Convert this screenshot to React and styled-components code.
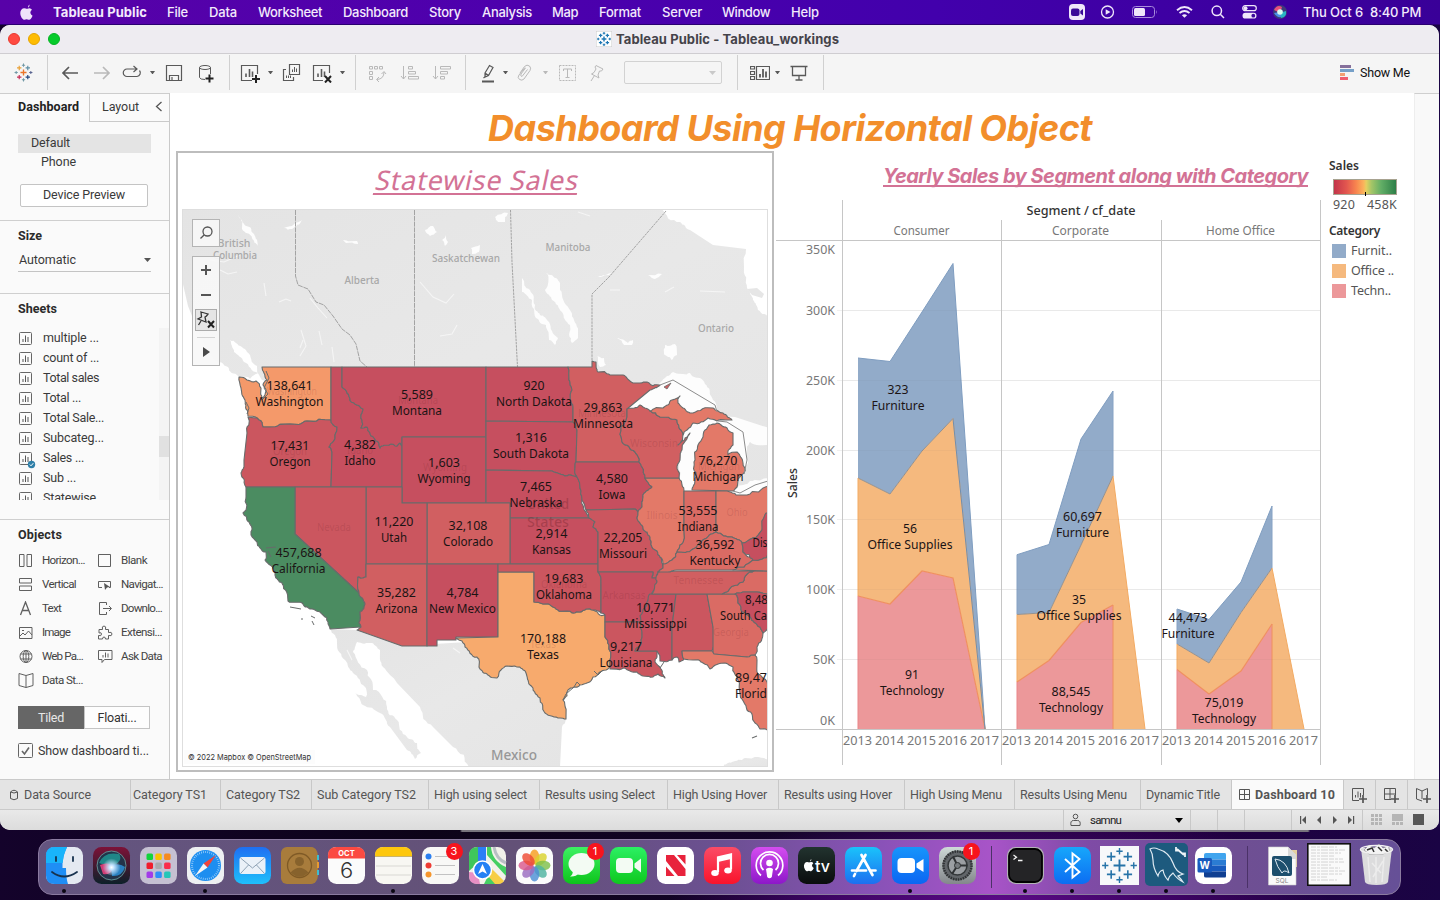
import React, { useLayoutEffect, useRef, useState } from "react";
import styled, { createGlobalStyle, css } from "styled-components";

const GlobalStyle = createGlobalStyle`
  * { box-sizing: border-box; }
  html, body { margin: 0; padding: 0; width: 1440px; height: 900px; overflow: hidden; }
  body { font-family: Roboto, "Liberation Sans", sans-serif; color: #333; }
  svg { display: block; flex: none; }
`;

/* ---------- text that is spaced out to a set measure ---------- */
const FitSpan = styled.span`
  display: inline-block;
  flex: none;
  width: ${(p) => p.$w}px;
  white-space: nowrap;
`;

/* lean: the width that a slanted line adds to its own bounding box */
function Fit({ w, lean = 0, children, ...rest }) {
  const ref = useRef(null);
  const [spacing, setSpacing] = useState(0);
  useLayoutEffect(() => {
    const range = document.createRange();
    range.selectNodeContents(ref.current);
    const natural = range.getBoundingClientRect().width - lean;
    setSpacing((w - natural) / ref.current.textContent.length);
  }, []);
  return (
    <FitSpan ref={ref} $w={w} style={{ letterSpacing: spacing }} {...rest}>
      {children}
    </FitSpan>
  );
}

/* ---------- desktop ---------- */
const Desktop = styled.div`
  width: 1440px;
  height: 900px;
  overflow: hidden;
  display: flex;
  flex-direction: column;
  background:
    linear-gradient(90deg, #0000 0 460px, #77737c 462px 1308px, #0000 1310px) 0 830px / 1440px 2px no-repeat,
    radial-gradient(ellipse 330px 90px at 1000px 900px, #5a0a86 0, #3c0462 55%, #0000 100%),
    linear-gradient(90deg, #14032b 0, #0c0318 30%, #16042d 60%, #22003f 80%, #1a0444 100%);
`;

const MenuBar = styled.div`
  height: 25px;
  flex: none;
  display: flex;
  align-items: center;
  padding: 0 19px 1px 20px;
  background: linear-gradient(90deg, #5802a8 0, #4d00ad 35%, #4200ac 65%, #390098 100%);
  border-bottom: 1px solid #2a0070;
  color: #f3eafc;
  font: 500 13px/22px Inter, sans-serif;
`;
const MenuItem = styled(Fit)`
  margin-left: ${(p) => p.$ml ?? 21}px;
  font-weight: ${(p) => (p.$bold ? 700 : 500)};
`;
const MenuSpacer = styled.div`flex: 1;`;
const MenuExtra = styled.div`
  margin-left: ${(p) => p.$ml}px;
`;

/* ---------- window ---------- */
const Window = styled.div`
  width: 1439px;
  height: 805px;
  flex: none;
  display: flex;
  flex-direction: column;
  border-radius: 10px;
  overflow: hidden;
  background: #f5f5f5;
`;
const TitleBar = styled.div`
  height: 29px;
  flex: none;
  display: flex;
  align-items: center;
  background: #eeecf1;
  border-bottom: 1px solid #cfcdd1;
  padding: 0 0 1px 8px;
`;
const Light = styled.i`
  width: 12px;
  height: 12px;
  border-radius: 50%;
  margin-right: 8px;
  background: ${(p) => p.$c};
  border: 1px solid ${(p) => p.$b};
`;
const WindowTitle = styled.div`
  margin-left: 528px;
  display: flex;
  align-items: center;
  gap: 4px;
  font: 700 13px/20px Inter, sans-serif;
  color: #45434a;
`;

const Toolbar = styled.div`
  height: 39px;
  flex: none;
  display: flex;
  align-items: center;
  padding: 0 29px 2px 0;
  background: #f5f5f5;
`;
const Tool = styled.div`
  margin-left: ${(p) => p.$ml}px;
  flex: none;
  color: ${(p) => (p.$off ? "#b9b9b9" : "#595959")};
`;
const Divider = styled.div`
  width: 1px;
  height: 35px;
  flex: none;
  margin-left: ${(p) => p.$ml}px;
  background: #d0d0d0;
`;
const FitSelect = styled.div`
  width: 98px;
  height: 23px;
  margin-left: 17px;
  flex: none;
  border: 1px solid #d2d2d2;
  border-radius: 2px;
  display: flex;
  align-items: center;
  justify-content: flex-end;
  padding-right: 5px;
  color: #c9c9c9;
`;
const ShowMe = styled.div`
  margin-left: auto;
  display: flex;
  align-items: center;
  gap: 6px;
  font: 12.5px/20px Roboto, sans-serif;
  color: #111;
`;

const Body = styled.div`
  height: 686px;
  flex: none;
  display: flex;
`;

/* ---------- side pane ---------- */
const Side = styled.div`
  width: 170px;
  flex: none;
  background: #fafafa;
  border-right: 1px solid #cacaca;
  font: 12.5px/20px Roboto, sans-serif;
  color: #3a3a3a;
`;
const SideTabs = styled.div`
  display: flex;
  height: 29px;
  border-top: 1px solid #cdcdcd;
`;
const ActiveTab = styled.div`
  width: 90px;
  padding: 3px 0 0 18px;
  border-right: 1px solid #cacaca;
  font-weight: 700;
  color: #222;
`;
const OtherTab = styled.div`
  flex: 1;
  display: flex;
  align-items: center;
  padding: 0 6px 2px 12px;
  justify-content: space-between;
  border-bottom: 1px solid #cacaca;
`;
const Section = styled.div`
  height: ${(p) => p.$h}px;
  padding-top: ${(p) => p.$top ?? 0}px;
  border-bottom: ${(p) => (p.$last ? 0 : 1)}px solid #cfcfcf;
  overflow: hidden;
`;
const Heading = styled.div`
  padding: 5px 0 0 18px;
  height: 26px;
  font-weight: 700;
  color: #2b2b2b;
`;
const DeviceRow = styled.div`
  width: 133px;
  height: 19px;
  line-height: 18px;
  margin-left: 18px;
  padding-left: ${(p) => p.$pad}px;
  background: ${(p) => (p.$on ? "#e4e4e4" : "none")};
`;
const PreviewButton = styled.div`
  width: 128px;
  height: 23px;
  margin: 12px 0 0 20px;
  border: 1px solid #c4c4c4;
  border-radius: 2px;
  background: #fff;
  text-align: center;
  line-height: 20px;
`;
const SizeSelect = styled.div`
  width: 133px;
  margin: 2px 0 0 18px;
  padding: 1px 0 0 1px;
  height: 23px;
  display: flex;
  justify-content: space-between;
  align-items: flex-start;
  border-bottom: 1px solid #c4c4c4;
  svg { margin-top: 8px; }
`;
const SheetBox = styled.div`
  height: 172px;
  margin-top: 8px;
  display: flex;
  justify-content: space-between;
  overflow: hidden;
`;
const SheetRow = styled.div`
  display: flex;
  align-items: center;
  height: 20px;
  padding-left: 18px;
  gap: 9px;
`;
const Track = styled.div`
  width: 10px;
  height: 172px;
  padding-top: 108px;
  background: #f4f4f4;
`;
const Thumb = styled.div`
  height: 21px;
  background: #e1e1e1;
`;
const ObjectGrid = styled.div`
  display: grid;
  grid-template-columns: 79px 72px;
  grid-auto-rows: 24px;
  margin: 2px 0 0 18px;
  font-size: 11.6px;
`;
const ObjectItem = styled.div`
  display: flex;
  align-items: center;
  gap: 8px;
  color: #444;
`;
const Segmented = styled.div`
  display: flex;
  margin: 14px 0 0 18px;
  width: 132px;
  height: 23px;
`;
const Segment = styled.div`
  flex: 1;
  text-align: center;
  line-height: 21px;
  border: 1px solid ${(p) => (p.$on ? "#666" : "#c4c4c4")};
  background: ${(p) => (p.$on ? "#666" : "#fdfdfd")};
  color: ${(p) => (p.$on ? "#e8e8e8" : "#333")};
`;
const CheckRow = styled.div`
  display: flex;
  align-items: center;
  gap: 4px;
  margin: 12px 0 0 18px;
`;

/* ---------- dashboard canvas ---------- */
const Canvas = styled.div`
  width: 1244px;
  flex: none;
  background: #fff;
  display: flex;
  flex-direction: column;
`;
const Gutter = styled.div`
  flex: 1;
  background: #f9f9f9;
  border-top: 1px solid #cfcfcf;
  border-left: 1px solid #eee;
`;
const DashTitle = styled.div`
  height: 58px;
  padding-left: 318px;
  font: italic 700 36px/70px Inter, sans-serif;
  color: #f28e2b;
`;
const Panels = styled.div`
  display: flex;
  padding-left: 6px;
`;
const MapPanel = styled.div`
  width: 598px;
  height: 621px;
  flex: none;
  border: 2px solid #bdbdbd;
  position: relative;
`;
const MapTitle = styled.div`
  height: 56px;
  padding-left: 198px;
  font: 400 27px/54px "Noto Sans", sans-serif;
  color: #d37295;
  span {
    height: 31px;
    line-height: 32px;
    margin-top: 11px;
    vertical-align: top;
    border-bottom: 2px solid #d37295;
    transform: skewX(-12deg);
  }
`;
const MapFrame = styled.div`
  width: 586px;
  height: 558px;
  margin-left: 4px;
  border: 1px solid #dedede;
`;
const controlBox = css`
  position: absolute;
  left: 14px;
  width: 28px;
  background: rgba(248, 248, 248, 0.93);
  border: 1px solid #b4b4b4;
  display: flex;
  flex-direction: column;
  align-items: center;
`;
const SearchControl = styled.div`
  ${controlBox}
  top: 66px;
  height: 28px;
  justify-content: center;
`;
const ZoomControl = styled.div`
  ${controlBox}
  top: 103px;
  height: 110px;
`;

const ChartPanel = styled.div`
  width: 544px;
  margin-left: 2px;
  flex: none;
`;
const ChartTitle = styled.div`
  height: 48px;
  padding-left: 107px;
  font: italic 700 20px/26px Inter, sans-serif;
  color: #d37295;
  span { border-bottom: 2px solid #d37295; height: 23px; line-height: 24px; margin-top: 13px; }
`;
const Legend = styled.div`
  padding: 5px 0 0 9px;
  font: 12.5px/20px "Noto Sans", sans-serif;
  color: #555;
`;
const LegendTitle = styled.div`
  height: 20px;
  font-weight: 600;
  font-size: 12px;
  color: #333;
`;
const Ramp = styled.div`
  width: 64px;
  height: 16px;
  margin: 3px 0 0 4px;
  border: 1px solid #a7a290;
  background: linear-gradient(90deg, #c2354a 0, #e2564f 20%, #f8864f 36%, #fbb45c 48%, #e5cf60 52%, #a6c667 60%, #62ae66 76%, #2d7f48 100%);
  display: flex;
  justify-content: center;
  align-items: flex-end;
`;
const RampMark = styled.i`
  width: 1px;
  height: 4px;
  margin-bottom: -2px;
  background: #000;
`;
const RampEnds = styled.div`
  display: flex;
  justify-content: space-between;
  width: 64px;
  margin: 0 0 6px 4px;
`;
const LegendRow = styled.div`
  display: flex;
  align-items: center;
  gap: 5px;
  height: 20px;
  padding-left: 3px;
`;
const Swatch = styled.i`
  width: 14px;
  height: 14px;
  background: ${(p) => p.$c};
`;

/* ---------- sheet tabs and status ---------- */
const TabStrip = styled.div`
  height: 31px;
  flex: none;
  display: flex;
  background: #e4e4e4;
  border-top: 1px solid #cacaca;
  border-bottom: 1px solid #cacaca;
  font: 12.5px/30px Roboto, sans-serif;
  color: #555;
`;
const SheetTab = styled.div`
  width: ${(p) => p.$w}px;
  flex: none;
  display: flex;
  align-items: center;
  gap: ${(p) => (p.$on ? 3 : 4)}px;
  padding-left: ${(p) => p.$pad}px;
  border-right: 1px solid #c8c8c8;
  background: ${(p) => (p.$on ? "#fafafa" : "none")};
  font-weight: ${(p) => (p.$on ? 700 : 400)};
  height: 29px;
`;
const StatusBar = styled.div`
  flex: 1;
  display: flex;
  align-items: stretch;
  padding-left: 1063px;
  background: linear-gradient(#e9e9e9, #dcdcdc);
  font: 11.5px/20px Roboto, sans-serif;
  color: #222;
`;
const StatusCell = styled.div`
  width: ${(p) => p.$w}px;
  flex: none;
  display: flex;
  align-items: center;
  padding: 0 ${(p) => p.$pr ?? 0}px 0 ${(p) => p.$pl ?? 0}px;
  gap: ${(p) => p.$gap ?? 0}px;
  border-left: 1px solid #c8c8c8;
`;

/* ---------- dock ---------- */
const DockBar = styled.div`
  width: 1363px;
  height: 56px;
  margin: 9px 0 0 38px;
  flex: none;
  display: flex;
  align-items: flex-start;
  padding: 3px 0 0 1.5px;
  border-radius: 14px;
  border: 1px solid #8b7ba0;
  background: linear-gradient(90deg, #645580 0, #635177 35%, #6b5091 50%, #8a52b8 62%, #a854c8 70%, #7f4ba6 77%, #6f4f93 88%, #665097 100%);
`;
const DockSlot = styled.div`
  width: 47px;
  flex: none;
  display: flex;
  flex-direction: column;
  align-items: center;
  position: relative;
`;
const RunDot = styled.i`
  width: 4px;
  height: 4px;
  border-radius: 50%;
  margin-top: 3px;
  background: #0a0612;
`;
const Badge = styled.span`
  position: absolute;
  top: 0;
  right: 1px;
  width: 17px;
  height: 17px;
  border-radius: 50%;
  background: #f7141d;
  color: #fff;
  font: 400 11px/17px Inter, sans-serif;
  text-align: center;
`;
const DockRule = styled.div`
  width: 1px;
  height: 42px;
  margin: 3px ${(p) => p.$r}px 0 10px;
  background: #4b3268;
`;

/* ---------- small icons ---------- */
const Line = ({ s = 20, w, h, sw = 1, box, children, ...r }) => (
  <svg width={w ?? s} height={h ?? s} viewBox={box ?? `0 0 ${w ?? s} ${h ?? s}`} fill="none" stroke="currentColor" strokeWidth={sw} {...r}>
    {children}
  </svg>
);
const Caret = ({ w = 5, h = 3.5, fill = "currentColor" }) => (
  <svg width={w} height={h} viewBox="0 0 6 4" preserveAspectRatio="none"><path d="M0 0H6L3 4Z" fill={fill} /></svg>
);

const plus = (x, y, r, c, w = 1) => (
  <path key={`${x}-${y}`} d={`M${x - r} ${y}H${x + r}M${x} ${y - r}V${y + r}`} stroke={c} strokeWidth={w} fill="none" />
);
const Sparkle = ({ size, mono, k = 1 }) => {
  const c = (v) => mono ?? v;
  return (
    <svg width={size} height={size} viewBox="0 0 20 20">
      {plus(10, 10, 3.2, c("#eb762a"), 1.2 * k)}
      {plus(5.5, 5.2, 2.3, c("#e8a034"), k)}
      {plus(14.5, 5.2, 2.3, c("#5d8ea5"), k)}
      {plus(5.5, 14.8, 2.3, c("#c52a54"), k)}
      {plus(14.5, 14.8, 2.3, c("#1f457e"), k)}
      {plus(10, 2.3, 1.7, c("#7199a6"), 0.9 * k)}
      {plus(10, 17.7, 1.7, c("#7199a6"), 0.9 * k)}
      {plus(2.3, 10, 1.7, c("#7199a6"), 0.9 * k)}
      {plus(17.7, 10, 1.7, c("#5a6591"), 0.9 * k)}
    </svg>
  );
};

const SheetGlyph = ({ check }) => (
  <Line w={16} h={15} overflow="visible">
    <rect x="1.5" y="1.5" width="12" height="12" rx="1" stroke="#666" />
    <path d="M5 11V8M7.500 11V4.500M10 11V6" stroke="#555" />
    {check && <g><circle cx="13.500" cy="13.500" r="3.700" fill="#2e7fa8" stroke="none" /><path d="M11.800 13.500L13 14.800L15.300 12.200" stroke="#fff" /></g>}
  </Line>
);
const icons = {
  back: <path d="M18 10H3M9 4L3 10L9 16" strokeWidth="1.700" />,
  fwd: <path d="M2 10H17M11 4L17 10L11 16" strokeWidth="1.700" />,
  loop: <path d="M14.500 6H5A3.700 3.700 0 0 0 5 13.500H15A3.700 3.700 0 0 0 17.500 7.500M11.500 3L15 6L11.500 9" strokeWidth="1.200" />,
  save: <path d="M2.500 2.500H17.500V17.500H2.500ZM5.500 17.500V12.500H14.500V17.500M8 14V17" strokeWidth="1.200" />,
  data: <><ellipse cx="9" cy="4.500" rx="5.500" ry="2" /><path d="M3.500 4.500V14.500Q4 16.500 9 16.500M14.500 4.500V11" /><path d="M13.500 11.500V19.500M9.500 15.500H17.500" stroke="#222" strokeWidth="2" /></>,
  sheet: <><path d="M17.500 11V2.500H1.500V17.500H12" strokeWidth="1.200" /><path d="M6 14V10.500M9.500 14V6M12.500 14V8.500" strokeWidth="1.600" /><path d="M16 12V20M12 16H20" stroke="#222" strokeWidth="2" /></>,
  dup: <><path d="M8.500 1.500H18.500V11.500H8.500ZM5 6.500H2.500V17.500H12.500V14" strokeWidth="1.200" /><path d="M11.500 9V6.500M13.500 9V4M15.500 9V5.500M5.500 15V12.500M7.500 15V12.500M9.500 15V12.500" /></>,
  clear: <><path d="M17.500 10V2.500H1.500V17.500H11" strokeWidth="1.200" /><path d="M6 14V10.500M9.500 14V6M12.500 14V8.500" strokeWidth="1.600" /><path d="M13 13L19 19.500M19 13L13 19.500" stroke="#222" strokeWidth="2" /></>,
  swap: <path d="M2.500 3.500H5.500V6H2.500ZM7.500 3.500H10.500V6H7.500ZM12.500 3.500H15.500V6H12.500ZM2.500 8.500H5.500V11.500H2.500ZM2.500 13.500H5.500V16.500H2.500ZM17 9Q17 16 10 16.500M14.500 11L17 8.500L19 11M12 14L9.500 16.500L12 19" />,
  sortA: <path d="M3.500 3V16M1 13L3.500 16L6 13M8.500 3.500H12.500V6H8.500ZM8.500 8.500H15.500V11H8.500ZM8.500 13.500H18.500V16H8.500Z" />,
  sortD: <path d="M3.500 3V16M1 13L3.500 16L6 13M8.500 3.500H18.500V6H8.500ZM8.500 8.500H15.500V11H8.500ZM8.500 13.500H12.500V16H8.500Z" />,
  pen: <><path d="M7 10L11.500 2.500L15 4.500L10.500 12.500L7 14ZM7 10L10.500 12.500M5.500 15L8 13" strokeWidth="1.200" /><path d="M4 18.500H16" strokeWidth="1.800" /></>,
  clip: <path d="M5 10L9.500 3.500Q12 1 14.500 3Q16.500 5 15 7.500L9 16Q7 18 4.500 16.500Q2 14.500 4 12L10 4.500M7 13.500L12.500 6.500M7 13.500Q5 13 6 11L10.500 5" />,
  text: <><rect x="2.500" y="2.500" width="16" height="15" strokeDasharray="2 1" /><path d="M6.500 8V6H14.500V8M10.500 6V14.500M8.500 14.500H12.500" /></>,
  pin: <path d="M9 2.500L16 6L14.500 8L12.500 8L11 12L12 15L4.500 11L7 9.500L9 6L8 4ZM7.500 12.500L4 18" />,
  cards: <><path d="M0.500 3.500H4.500V6H0.500ZM0.500 8.500H4.500V11.500H0.500ZM0.500 13.500H4.500V16.500H0.500ZM6.500 3.500H19.500V16.500H6.500Z" strokeWidth="1.200" /><path d="M10 14.500V11M13 14.500V6M16 14.500V8.500" strokeWidth="1.800" /></>,
  present: <path d="M1.500 3.500H18.500M3.500 4V12.500H16.500V4M10 12.500V17M6.500 17H13.500" strokeWidth="1.300" />,
};

/* [icon, left gap, disabled]; a caret or a divider is named instead of an icon */
const tools = [
  ["back", 12], ["fwd", 12, 1], ["loop", 10], ["caret", 8], ["save", 9], ["data", 12], ["|", 13],
  ["sheet", 10], ["caret", 8], ["dup", 8], ["clear", 11], ["caret", 8], ["|", 10],
  ["swap", 11, 1], ["sortA", 13, 1], ["sortD", 12, 1], ["|", 13],
  ["pen", 12], ["caret", 5], ["clip", 7, 1], ["caret", 8, 1], ["text", 9, 1], ["pin", 10, 1], ["select"],
  ["|", 15], ["cards", 12], ["caret", 5], ["present", 9], ["|", 14],
];

const objects = [
  ["Horizon...", 43, <path d="M1.500 1.500H6V13.500H1.500ZM9 1.500H13.500V13.500H9Z" />],
  ["Blank", 26, <path d="M1.500 1.500H13.500V13.500H1.500Z" />],
  ["Vertical", 34, <path d="M1.500 1.500H13.500V6H1.500ZM1.500 9H13.500V13.500H1.500Z" />],
  ["Navigat...", 42, <><path d="M5 10.500H1.500V4.500H13.500V10.500H12" /><path d="M7 6L13 10L10 10.500L8 13Z" fill="#555" stroke="none" /></>],
  ["Text", 19, <path d="M2.500 14L7.500 1L12.500 14M4.300 9.500H10.700" strokeWidth="1.300" />],
  ["Downlo...", 41, <path d="M9.500 4V1.500H2.500V13.500H9.500V11M6 7.500H14M12 5L14.500 7.500L12 10" />],
  ["Image", 28, <path d="M1.500 2.500H14V13.500H1.500ZM2 11L5 8L7 10L10.500 6L14 10M4 5.500H6" />],
  ["Extensi...", 41, <path d="M2 4.500H5.500Q4.500 1 7 1Q9.500 1 8.500 4.500H11.500V7.500Q15 6.500 15 9Q15 11.500 11.500 10.500V14H8.500Q8.500 12 7 12Q5.500 12 5.500 14H1.500V10.500Q4.500 11.500 4.500 9Q4.500 7 2 8Z" />],
  ["Web Pa...", 41, <><circle cx="8" cy="7.500" r="6" /><ellipse cx="8" cy="7.500" rx="2.800" ry="6" /><path d="M2.500 5H13.500M2.500 10H13.500M8 1.500V13.500" /></>],
  ["Ask Data", 41, <path d="M1.500 1.500H15V10.500H7.500L5 13.500V10.500H1.500ZM6 8.500V6M8.500 8.500V3.500M11 8.500V4.500" />],
  ["Data St...", 41, <path d="M8 2.500L1 0.500V12.500L8 14.500L15 12.500V0.500ZM8 2.500V14.500" />],
];

const sheets = [["multiple ...", 56], ["count of ...", 56], ["Total sales", 56], ["Total ...", 38], ["Total Sale...", 61], ["Subcateg...", 61], ["Sales ...", 41, true], ["Sub ...", 33], ["Statewise", 53]];

/* ---------- map data ---------- */
const R0 = "#c64f5f", R1 = "#cb565f", R2 = "#d15f61", R3 = "#da6b64", R4 = "#e37968";
const states = [
  ["#f4996a", "239,377 247,380 256,381 261,388 263,398 266,391 263,385 267,380 264,373 262,367 331,367 331,420 307,421 290,424 270,427 263,427 257,418 248,416 247,410 245,400 241,388"],
  [R1, "248,417 257,418 263,427 270,427 290,424 307,421 331,420 337,427 335,435 329,447 332,452 331,487 246,487 243,478 241,473 244,460 247,433"],
  [R0, "331,367 342,367 342,387 347,393 357,405 363,409 362,420 361,428 367,427 370,433 374,438 380,448 389,445 397,446 400,443 402,446 402,487 331,487 332,452 329,447 335,435 337,427 331,420"],
  [R0, "342,367 486,367 486,437 402,437 402,446 400,443 397,446 389,445 380,448 374,438 370,433 367,427 361,428 362,420 363,409 357,405 347,393 342,387"],
  [R0, "402,437 486,437 486,503 402,503"],
  [R0, "486,367 568,367 569,380 572,390 573,407 573,422 486,421"],
  [R0, "486,421 573,422 577,430 576,462 575,467 577,477 570,475 560,474 552,471 486,470"],
  [R0, "486,470 552,471 560,474 570,475 577,477 580,488 582,500 586,512 589,518 510,518 510,503 486,503"],
  [R0, "510,518 589,518 595,522 593,527 598,532 598,564 510,564"],
  [R2, "427,503 510,503 510,564 427,564"],
  [R1, "366,487 402,487 402,503 427,503 427,564 366,564"],
  [R1, "295,487 366,487 366,577 363,578 358,577 359,593 295,534"],
  ["#4b8c61", "246,487 295,487 295,534 359,593 365,604 360,612 359,623 361,627 330,629 328,622 323,615 315,610 303,604 288,601 287,593 282,583 275,575 270,565 265,560 266,552 260,548 257,542 251,535 249,522 243,513 246,497"],
  [R2, "366,564 427,564 427,646 402,646 357,630 361,627 359,623 360,612 365,604 359,593 358,577 363,578 366,577"],
  [R0, "427,564 498,564 498,637 456,637 456,640 437,640 437,646 427,646"],
  ["#f7aa6d", "498,572 534,572 534,602 543,604 553,607 567,611 580,612 593,610 605,615 605,637 609,645 610,660 608,669 600,672 593,677 580,685 568,690 563,700 566,719 560,718 545,713 540,698 530,685 526,673 517,667 507,666 501,670 497,678 487,674 479,667 477,657 465,647 456,638 498,637"],
  [R1, "498,564 598,564 598,572 601,585 601,613 593,610 580,612 567,611 553,607 543,604 534,602 534,572 498,572"],
  [R2, "568,367 592,367 592,361 596,362 598,372 610,375 623,375 633,383 647,382 660,385 650,390 627,409 627,417 621,427 622,442 635,452 639,462 576,462 577,430 573,422 573,407 572,390 569,380"],
  [R0, "576,462 639,462 642,467 645,478 652,487 643,497 642,507 638,512 635,509 586,510 582,500 580,488 577,477 575,467"],
  [R1, "586,510 635,509 638,512 637,518 643,528 650,537 652,547 660,557 663,568 658,572 657,578 652,578 653,572 598,572 598,532 593,527 595,522 589,518"],
  [R0, "598,572 653,572 652,578 657,578 657,582 652,593 648,600 643,610 641,622 605,622 605,615 601,613 601,585"],
  [R1, "605,622 641,622 642,632 635,651 657,651 657,657 655,662 661,669 665,678 658,674 653,677 643,676 637,672 630,671 623,668 610,669 610,660 609,645 605,637"],
  [R0, "650,594 676,594 672,627 672,660 660,661 657,651 635,651 642,632 641,622 643,610 648,600"],
  [R1, "676,594 707,594 713,627 712,651 682,651 684,659 679,662 677,657 672,660 672,627"],
  [R3, "707,594 735,594 738,603 750,617 760,627 763,633 757,647 755,655 747,657 713,654 713,627"],
  [R4, "682,651 712,651 714,654 747,657 755,655 757,660 762,677 769,690 769,731 760,729 755,723 747,710 740,693 738,680 733,667 725,663 710,669 703,663 693,660 684,659"],
  [R3, "769,571 754,571 743,582 722,594 735,594 743,592 757,592 769,595"],
  [R0, "735,594 743,592 757,592 769,595 769,626 763,633 760,627 750,617 738,603"],
  [R2, "658,572 677,571 754,571 743,582 722,594 652,594 657,582"],
  [R4, "645,478 679,478 682,485 684,491 684,530 680,545 677,552 672,560 663,564 660,557 652,547 650,537 643,528 637,518 638,512 642,507 643,497 652,487"],
  [R2, "627,409 640,405 643,407 650,411 660,417 677,420 681,430 683,433 678,445 685,438 690,433 682,450 680,460 679,478 645,478 642,467 639,462 635,452 622,442 621,427 627,417"],
  [R4, "650,411 663,408 672,400 680,396 678,403 683,408 693,413 713,408 718,411 723,413 732,420 717,421 708,418 693,423 687,430 683,435 681,430 677,420 660,417"],
  [R4, "705,430 709,425 717,423 727,428 733,433 733,445 728,455 737,452 743,463 744,473 737,487 733,491 692,490 696,477 695,460 698,445 703,437"],
  [R3, "684,491 716,491 716,532 703,540 693,549 677,552 680,545 684,530"],
  [R4, "716,491 727,491 736,495 747,495 769,486 769,513 762,530 742,543 732,537 716,532"],
  [R3, "658,572 663,568 663,564 672,560 677,552 693,549 703,540 716,532 732,537 742,543 743,552 750,557 753,560 733,570 677,570"],
  [R3, "753,560 762,559 769,554 769,571 733,570"],
  [R0, "742,543 762,530 766,513 769,513 769,554 762,559 753,560 743,552"],
];
const land = [
  "182,209 660,209 680,222 690,230 713,245 746,249 744,267 747,288 753,300 758,310 769,320 769,500 262,380 257,366 247,352 236,343 230,340 234,352 244,362 258,373 250,379 238,376 228,367 214,360 200,336 188,306 182,280",
  "330,629 357,630 402,646 500,640 560,690 566,719 562,727 560,767 469,767 453,747 433,727 420,707 397,683 383,667 380,650 372,643 357,642 353,652 367,670 373,690 387,707 397,720 407,737 417,743 421,753 415,759 407,750 390,727 380,713 363,705 355,693 366,697 365,687 353,673 345,660 337,643",
  "723,767 732,762 745,758 758,757 769,762 769,767",
];
const water = [
  "627,409 650,390 660,383 667,376 673,372 683,374 690,373 700,378 707,387 711,396 713,400 717,412 735,417 769,428 769,445 750,442 747,452 748,463 744,475 736,488 750,481 769,478 769,490 740,500 681,494 679,470 682,445 676,446 676,420",
  "546,273 556,278 560,290 566,305 574,320 578,338 572,343 570,325 562,312 552,300 545,290",
  "522,278 530,290 535,305 540,315 549,322 552,331 558,338 555,345 549,340 546,325 536,318 532,300 522,292",
  "596,355 604,358 606,365 600,367",
  "665,345 675,344 677,355 672,360 664,354",
  "617,338 628,343 633,340 632,345 624,345",
  "343,240 357,241 358,244 346,243",
  "425,230 433,226 437,232 430,236",
  "446,235 448,242 445,246 442,240",
  "238,214 244,224 254,234 258,246 252,238 242,229",
  "495,217 508,213 505,222 498,222",
  "471,248 480,245 479,252 472,254",
  "598,276 612,272 609,275 600,277",
  "648,275 662,274 655,279",
  "302,220 292,229 284,228 292,226",
];
const ripples = [
  "310,298 318,308 327,318", "301,330 306,346 300,356", "319,331 322,345", "303,340 300,348", "332,347 334,362",
  "420,282 433,297 446,303 454,294", "440,336 452,334 457,325", "220,270 228,274 237,272", "210,260 224,262 240,255", "279,302 286,299 291,301",
  "264,283 266,296", "610,290 620,290", "665,292 674,287", "700,291 725,292", "578,212 590,216", "347,650 352,660", "460,653 453,648",
];

const noise = (a, b, c, d) => {
  const v = Math.sin(a * 12.9898 + b * 78.233 + c * 37.719 + d * 11.137) * 43758.5453;
  return (v - Math.floor(v)) * 2 - 1;
};
/* Sloping edges wobble like rivers and coasts; level and upright ones stay ruled. */
const wobble = (p, q, depth) => {
  const dx = q[0] - p[0], dy = q[1] - p[1];
  const len = Math.hypot(dx, dy);
  if (depth === 0 || len < 2.5 || len > 26 || Math.abs(dx) < 0.6 || Math.abs(dy) < 0.6) return [q];
  const [s, e] = p[0] < q[0] || (p[0] === q[0] && p[1] < q[1]) ? [p, q] : [q, p];
  const n = noise(s[0], s[1], e[0], e[1]) * 0.17;
  const m = [(p[0] + q[0]) / 2 - (e[1] - s[1]) * n, (p[1] + q[1]) / 2 + (e[0] - s[0]) * n];
  return [...wobble(p, m, depth - 1), ...wobble(m, q, depth - 1)];
};
const outline = (str) => {
  const pts = str.split(" ").map((s) => s.split(",").map(Number));
  const out = [pts[0]];
  pts.forEach((p, i) => out.push(...wobble(p, pts[(i + 1) % pts.length], 3)));
  return out.map((p) => p.map((v) => v.toFixed(1)).join(",")).join(" ");
};

/* [value, width, centre x, value y, name, width] */
const mapLabels = [
  ["138,641", 46, 289.5, 386, "Washington", 68], ["17,431", 39, 290, 446, "Oregon", 41], ["4,382", 32, 360, 445, "Idaho", 31],
  ["5,589", 32, 417, 395, "Montana", 50], ["1,603", 32, 444, 463, "Wyoming", 53], ["920", 21, 534, 386, "North Dakota", 76],
  ["1,316", 32, 531, 438, "South Dakota", 76], ["7,465", 32, 536, 487, "Nebraska", 53], ["4,580", 32, 612, 479, "Iowa", 27],
  ["29,863", 39, 603, 408, "Minnesota", 60], ["76,270", 39, 718, 461, "Michigan", 51], ["11,220", 39, 394, 522, "Utah", 26],
  ["32,108", 39, 468, 526, "Colorado", 50], ["2,914", 32, 551.5, 534, "Kansas", 39], ["22,205", 39, 623, 538, "Missouri", 48],
  ["53,555", 39, 698, 511, "Indiana", 41], ["36,592", 39, 715, 545, "Kentucky", 51], ["457,688", 46, 298.5, 553, "California", 54],
  ["35,282", 39, 396.5, 593, "Arizona", 42], ["4,784", 32, 462.5, 593, "New Mexico", 67], ["19,683", 39, 564, 579, "Oklahoma", 56],
  ["170,188", 46, 543, 639, "Texas", 32], ["10,771", 39, 655.5, 608, "Mississippi", 63], ["9,217", 32, 626, 647, "Louisiana", 53],
  ["8,48", 23, 756.5, 600, "South Ca", 47, 743.5], ["89,47", 32, 751, 678, "Florid", 32],
];
const baseLabels = [
  ["British", 234, 243, 33], ["Columbia", 235, 255, 44], ["Alberta", 362, 280, 35], ["Saskatchewan", 466, 258, 68], ["Manitoba", 568, 247.5, 45], ["Ontario", 716, 328, 36],
];
const faintLabels = [
  ["Nevada", 334, 527, 34], ["Wisconsin", 654, 443, 48], ["Illinois", 662, 515, 31], ["Ohio", 737, 512, 21], ["Tennessee", 698.5, 580, 50],
  ["Arkansas", 624, 595, 43], ["Georgia", 731, 632, 36], ["Washington", 292, 391, 50], ["Oregon", 290, 451, 34], ["Montana", 418, 400, 40],
  ["Minnesota", 602, 413, 48], ["Wyoming", 445, 467, 44], ["Idaho", 360, 450, 26], ["Michigan", 719, 466, 42], ["Texas", 543, 644, 26], ["Oklahoma", 564, 584, 46],
];

const T = ({ x, y, w, size = 12.5, fill = "#1c1414", anchor = "middle", children, ...r }) => (
  <text x={x} y={y + size * 0.36} textAnchor={anchor} fontSize={size} fill={fill} textLength={w} lengthAdjust="spacingAndGlyphs" fontFamily='"Noto Sans", sans-serif' {...r}>{children}</text>
);

function SalesMap() {
  return (
    <svg width="584" height="556" viewBox="183 210 584 556">
      <rect x="182" y="209" width="587" height="558" fill="#fff" />
      <defs>
        <linearGradient id="terrain" x1="0" x2="1" y1="0" y2="1"><stop offset="0" stopColor="#e4e4e4" /><stop offset=".5" stopColor="#e8e8e8" /><stop offset="1" stopColor="#e5e5e5" /></linearGradient>
      </defs>
      {land.map((p) => <polygon key={p} points={outline(p)} fill="url(#terrain)" />)}
      {water.map((p) => <polygon key={p} points={outline(p)} fill="#fdfdfd" />)}
      <path d="M747 289L757 288L764 294L762 298L752 295Z" fill="#e6e6e6" />
      {ripples.map((p) => <polyline key={p} points={p} fill="none" stroke="#f5f5f5" strokeWidth="1.100" />)}
      <g fill="none" stroke="#a3a3a3" strokeWidth="1">
        <path d="M295.500 210V276L298 285L308 289L316 302L324 305L333 316L342 329L350 335L356 344L360 361L367 367M414.500 210V367" strokeDasharray="5 0.800" />
        <path d="M510.500 210L512 262L517.500 367M666 211L609 277L592 294V361" strokeDasharray="2.500 0.800" />
      </g>
      {baseLabels.map(([t, x, y, w]) => <T key={t} x={x} y={y} w={w} size={11} fill="#a8a8a8" fontWeight="500">{t}</T>)}
      <T x={514} y={755} w={46} size={14} fill="#979797" fontWeight="500">Mexico</T>
      <g stroke="#686b6b" strokeWidth="1.100" strokeLinejoin="round">
        {states.map(([c, p]) => <polygon key={p} points={outline(p)} fill={c} />)}
        <path d="M664 387L671 383L667 389Z" fill={R2} strokeWidth=".8" />
        <path d="M266 371L269 378L264 388L268 394L262 400M246 402L249 408L247 414" fill="none" strokeWidth="1" />
        <path d="M266 548L276 547M268 551L271 557M290 607L301 609M311 616L315 618M312 621L314 625M301 619H303" fill="none" strokeWidth="1" />
        <path d="M563 700L566 694L574 687L577 682L580 685M594 671L598 675L603 670M660 668L664 662" fill="none" strokeWidth="1" />
        <path d="M752 738L757 736" fill="none" />
      </g>
      <g fill="none" stroke="#8c8c8c" strokeWidth="1">
        <path d="M660 385L673 380L715 405L717 412M718 421L727 422L743 432L747 460L744 474M733 491L740 493L755 485L768 481" />
      </g>
      {faintLabels.map(([t, x, y, w]) => <T key={t} x={x} y={y} w={w} size={11} fill="rgba(90,20,30,.15)">{t}</T>)}
      <T x={548} y={504} w={42} size={14} fill="rgba(90,20,30,.28)" fontWeight="500">United</T>
      <T x={548} y={522} w={42} size={14} fill="rgba(90,20,30,.28)" fontWeight="500">States</T>
      {mapLabels.map(([v, w, x, y, n, nw, nx]) => (
        <g key={n}>
          <T x={x} y={y - 0.4} w={w}>{v}</T>
          <T x={nx ?? x} y={y + 15.7} w={nw}>{n}</T>
        </g>
      ))}
      <T x={760} y={542.5} w={15}>Dis</T>
      <rect x="184" y="750" width="131" height="14" fill="#fcfcfc" />
      <T x={188} y={757} w={123} size={8} anchor="start" fill="#333" fontFamily="Inter, sans-serif">© 2022 Mapbox © OpenStreetMap</T>
    </svg>
  );
}

/* ---------- area chart ---------- */
const groups = [
  { name: "Consumer", nw: 56, cx: 921.5, x: [858, 890, 922, 953, 985], f: [358, 361.5, 312, 263.5, 729], o: [478, 494, 451, 418.5, 729], t: [596, 604, 571, 578, 729] },
  { name: "Corporate", nw: 57, cx: 1080.5, x: [1017, 1049, 1081, 1113, 1145], f: [554.7, 544.5, 439, 391], o: [614.5, 612.5, 545, 476, 729], t: [682, 660.5, 622.5, 605] },
  { name: "Home Office", nw: 69, cx: 1240.5, x: [1177, 1209, 1241, 1272, 1304], f: [609, 619.5, 582, 506], o: [644, 663, 612.5, 568, 729], t: [669.5, 694, 671, 624] },
];
const chartLabels = [
  ["323", 21, 898, 389, "Furniture", 53], ["56", 14, 910, 528, "Office Supplies", 85], ["91", 14, 912, 674, "Technology", 64],
  ["60,697", 39, 1082.5, 516.5, "Furniture", 53], ["35", 14, 1079, 599.5, "Office Supplies", 85], ["88,545", 39, 1071, 691.5, "Technology", 64],
  ["44,473", 39, 1188, 617.5, "Furniture", 53], ["75,019", 39, 1224, 702.5, "Technology", 64],
];
/* A lower series that stops early drops to the axis at its last year. */
const band = (xs, top, low) => {
  const floor = top.map((_, i) => `${xs[i]},${low[i] ?? 729}`);
  if (low.length && low.length < top.length) floor.splice(low.length, 0, `${xs[low.length - 1]},729`);
  return [...top.map((y, i) => `${xs[i]},${y}`), ...floor.reverse()].join(" ");
};
const gridYs = [310.5, 380.5, 450.5, 519.5, 589.5, 659.5];
const axisLabels = [["350K", 249.5, 29], ["300K", 310.5, 29], ["250K", 380.5, 29], ["200K", 450.5, 29], ["150K", 519.5, 29], ["100K", 589.5, 29], ["50K", 659.5, 22], ["0K", 720.5, 15]];

function AreaChart() {
  return (
    <svg width="546" height="568" viewBox="776 199 546 568" overflow="visible">
      {gridYs.map((y) => <path key={y} d={`M837 ${y}H1320`} stroke="#f0f0f0" />)}
      {groups.map((g) => (
        <g key={g.name} strokeWidth="1">
          <polygon points={band(g.x, g.f, g.o)} fill="#92abc9" />
          <polygon points={band(g.x, g.o, g.t)} fill="#f5b97e" />
          <polygon points={band(g.x, g.t, [])} fill="#ec989a" />
          <polyline points={g.f.map((y, i) => `${g.x[i]},${y}`).join(" ")} fill="none" stroke="#7f9dc0" />
          <path d={`M${g.x[0]} ${g.f[0]}V${g.o[0]}M${g.x[3]} ${g.f[3]}V${g.o[3]}`} stroke="#86a2c4" strokeOpacity={g.f.length === 4 ? 1 : 0} />
          <polyline points={g.o.slice(0, 4).map((y, i) => `${g.x[i]},${y}`).join(" ")} fill="none" stroke="#94918f" />
          <path d={`M${g.x[0]} ${g.o[0]}V${g.t[0]}M${g.x[3]} ${g.o[3]}L${g.x[4]} 729`} stroke="#f3ab63" />
          <polyline points={g.t.map((y, i) => `${g.x[i]},${y}`).join(" ")} fill="none" stroke="#f0905f" strokeWidth="1.200" />
          <path d={`M${g.x[0]} ${g.t[0]}V729`} stroke="#ea8588" />
          {g.t.length === 4 && <path d={`M${g.x[3]} ${g.t[3]}V729`} stroke="#f0905f" />}
        </g>
      ))}
      {gridYs.map((y) => <path key={y} d={`M843 ${y}H1320`} stroke="rgba(80,80,80,.04)" />)}
      <polyline points="953,418.500 985,729" fill="none" stroke="#6f8fb2" />
      <g stroke="#c6c6c6" fill="none">
        <path d="M776 240.500H1321M776 729.500H1321M842.500 200V765M1001.500 220V765M1161.500 220V765M1320.500 200V765" />
      </g>
      <T x={1081} y={210.5} w={109} size={12} fill="#333" fontWeight="500">Segment / cf_date</T>
      {groups.map((g) => <T key={g.name} x={g.cx} y={230.5} w={g.nw} fill="#787878">{g.name}</T>)}
      {axisLabels.map(([t, y, w]) => <T key={t} x={835} y={y} w={w} anchor="end" fill="#787878">{t}</T>)}
      {groups.map((g) => g.x.map((x, i) => <T key={x} x={x - 0.5} y={740.5} w={29} fill="#787878">{2013 + i}</T>))}
      <T x={0} y={0} w={30} size={12} fill="#333" fontWeight="500" transform="translate(792.500 483) rotate(-90)">Sales</T>
      {chartLabels.map(([v, w, x, y, n, nw]) => (
        <g key={v}>
          <T x={x} y={y} w={w}>{v}</T>
          <T x={x} y={y + 16.1} w={nw}>{n}</T>
        </g>
      ))}
    </svg>
  );
}

/* ---------- dock icons ---------- */
const Tile = ({ fill, children, grad, id }) => (
  <svg width="43" height="43" viewBox="0 0 43 43">
    {grad && <defs><linearGradient id={id} x1="0" y1="0" x2="0" y2="1"><stop offset="0" stopColor={grad[0]} /><stop offset="1" stopColor={grad[1]} /></linearGradient></defs>}
    <rect x="3" y="4" width="37" height="37" rx="8.500" fill={grad ? `url(#${id})` : fill} />
    {children}
  </svg>
);
const apple = "M8.800 2.800Q8.700 .9 10.200 0Q10.300 1.900 8.800 2.800ZM8.300 3.600Q9 3.200 10 3.200Q11.500 3.300 12.300 4.500Q10.700 5.600 10.900 7.400Q11.100 9 12.800 9.800Q11.400 13.300 9.900 13.300Q9.200 13.300 8.500 13Q7.500 12.600 6.600 13Q5.600 13.400 5 13.300Q3.200 12.600 2.300 9.300Q1.600 6.300 3 4.500Q4.600 2.700 6.900 3.500Q7.600 3.800 8.300 3.600Z";
const petals = ["#f59d1f", "#d9d22d", "#7fbf4b", "#4fb3a0", "#4d8fd4", "#9a6cc0", "#d9588c", "#ee4a35"];
const dots9 = ["#11d33c", "#f7c200", "#f58a1f", "#f01c2c", "#a9a9ae", "#fa2c4c", "#a23be8", "#2f8ff8", "#25c6b8"];

const dock = [
  [<Tile key="i" fill="#e4e9f1"><path d="M11.500 4H24Q19 14 19.500 25H23Q23 35 25 41H11.500Q3 41 3 32.500V12.500Q3 4 11.500 4Z" fill="#1f8ef5" /><path d="M3 14Q3 4 11.500 4H24Q20 12 19.600 20H3Z" fill="#19b4fb" /><path d="M13 14V18M30 14V18M9 29Q21 38 34 29" stroke="#17324e" strokeWidth="1.800" fill="none" strokeLinecap="round" /></Tile>, true],
  [<Tile key="i" id="siri" grad={["#7d1238", "#0c2029"]}><defs><radialGradient id="siriGlow" cx=".5" cy=".55" r=".5"><stop offset="0" stopColor="#fff" /><stop offset=".25" stopColor="#c9e6ff" /><stop offset="1" stopColor="#c9e6ff" stopOpacity="0" /></radialGradient></defs><circle cx="21.500" cy="22.500" r="14.500" fill="#233349" /><path d="M9 20Q14 8 29 11Q34 18 21 24Z" fill="#1fa39c" opacity=".75" /><path d="M10 22Q18 18 24 24Q20 33 13 31Z" fill="#f0407c" opacity=".85" /><path d="M21 22Q30 20 35 24Q32 34 22 33Z" fill="#2c8fd6" opacity=".85" /><circle cx="21.500" cy="23.500" r="9" fill="url(#siriGlow)" /><circle cx="21.500" cy="22.500" r="14.500" fill="none" stroke="#6fa5a5" strokeWidth=".8" /></Tile>],
  [<Tile key="i" fill="#c5c0d2">{dots9.map((c, i) => <rect key={i} x={9.5 + (i % 3) * 8.8} y={10.5 + Math.floor(i / 3) * 9} width="6.500" height="6.500" rx="1.500" fill={c} />)}</Tile>],
  [<Tile key="i" fill="#eef0f2"><circle cx="21.500" cy="22.500" r="15.500" fill="#1d8ef0" /><circle cx="21.500" cy="22.500" r="13.500" fill="none" stroke="#a9d6fb" strokeWidth="2" strokeDasharray=".7 1.400" /><path d="M32 12L19.500 20.500L23.500 24.500Z" fill="#f0443c" /><path d="M11 33L19.500 20.500L23.500 24.500Z" fill="#f5f5f5" /></Tile>, true],
  [<Tile key="i" id="mail" grad={["#1e6ff2", "#1fc0fb"]}><rect x="8.500" y="14" width="26" height="17" rx="2.500" fill="#eaf1f8" /><path d="M9.500 15L21.500 25L33.500 15M9.500 30.500L17.500 22M33.500 30.500L25.500 22" stroke="#8ea2b4" fill="none" /></Tile>],
  [<Tile key="i" fill="#a87c3c"><path d="M38 12H41V17H38ZM38 27H41V32H38Z" fill="#3bbed0" /><path d="M38 19H41V25H38Z" fill="#e89b30" /><rect x="3" y="4" width="36" height="37" rx="6" fill="#a87c3c" /><circle cx="21.500" cy="22.500" r="12" fill="none" stroke="#7f5a26" strokeWidth="1.300" /><circle cx="21.500" cy="18.500" r="4.500" fill="#87622c" /><path d="M12.500 29.500Q21.500 20 30.500 29.500Q21.500 38 12.500 29.500Z" fill="#87622c" /></Tile>],
  [<Tile key="i" fill="#fbfbfb"><path d="M3 15.500V12.500Q3 4 11.500 4H31.500Q40 4 40 12.500V15.500Z" fill="#fb4a42" /><text x="21.500" y="12.700" textAnchor="middle" fontSize="7.500" fontWeight="700" fill="#fff" fontFamily="Inter">OCT</text><text x="21.500" y="34.500" textAnchor="middle" fontSize="22" fontWeight="300" fill="#333" fontFamily="Inter">6</text></Tile>],
  [<Tile key="i" fill="#f8f7f2"><path d="M3 13V12.500Q3 4 11.500 4H31.500Q40 4 40 12.500V13Z" fill="#fdc70c" /><path d="M3 13.500H40" stroke="#c9b46a" /><path d="M4 23H39M4 32H39" stroke="#d9d8d3" /></Tile>, true],
  [<Tile key="i" fill="#f8f8f6"><circle cx="9.500" cy="13.500" r="3" fill="#2a7ff0" /><circle cx="9.500" cy="22.500" r="3" fill="#ee3b33" /><circle cx="9.500" cy="31.500" r="3" fill="#f5952c" /><path d="M16 13.500H36M16 22.500H36M16 31.500H36" stroke="#c2c2c2" /></Tile>, false, "3"],
  [<Tile key="i" fill="#f3f1ea"><path d="M11.500 4H12V20L3 28V12.500Q3 4 11.500 4Z" fill="#3fc65b" /><path d="M21 4H25Q26 18 40 24V33L21 12Z" fill="#45cf63" /><path d="M12 4H20V24H12Z" fill="#2c7ef6" /><path d="M3 29L12 30L14 41H11.500Q3 41 3 33Z" fill="#e78fc4" /><path d="M20 20L38 38Q36 41 32 41H27L20 30Z" fill="#f7ce45" /><path d="M22 33L29 41H18Z" fill="#45cf63" /><path d="M28 4Q30 16 40 20" stroke="#b9bfc4" strokeWidth="3" fill="none" /><circle cx="16.500" cy="27" r="9" fill="#2481f4" stroke="#fff" strokeWidth="1.500" /><path d="M16.500 21L21 31L16.500 28.500L12 31Z" fill="#fff" /></Tile>],
  [<Tile key="i" fill="#fbfbfb">{petals.map((c, i) => <ellipse key={c} cx="21.500" cy="14" rx="4.800" ry="7.500" fill={c} opacity=".82" transform={`rotate(${i * 45} 21.500 22.500)`} />)}</Tile>],
  [<Tile key="i" id="msg" grad={["#3df263", "#0dc41b"]}><ellipse cx="21.500" cy="21" rx="13" ry="11" fill="#f3fbf3" /><path d="M13 27Q13 32 10 33.500Q16 34 19 30Z" fill="#f3fbf3" /></Tile>, false, "1"],
  [<Tile key="i" id="ft" grad={["#2bf063", "#0fc81e"]}><rect x="9" y="15" width="17" height="15" rx="4" fill="#f3fbf3" /><path d="M27.500 20.500L34 15.500V29.500L27.500 24.500Z" fill="#f3fbf3" /></Tile>],
  [<Tile key="i" fill="#fff"><path d="M12 12H20L31.500 26V33H24L12 18ZM23 12H31.500V21.500ZM12 23.500L20.500 33H12Z" fill="#e8233c" /></Tile>],
  [<Tile key="i" id="music" grad={["#fb4c66", "#f9132b"]}><path d="M17 29V14.500L30 11.500V26.500" stroke="#fff" strokeWidth="2.200" fill="none" /><path d="M17 14.500L30 11.500V16L17 19Z" fill="#fff" /><ellipse cx="14" cy="30" rx="3.800" ry="3" fill="#fff" /><ellipse cx="27" cy="27.500" rx="3.800" ry="3" fill="#fff" /></Tile>],
  [<Tile key="i" id="pod" grad={["#d54df0", "#8d17c9"]}><circle cx="21.500" cy="20" r="3.300" fill="#fff" /><path d="M18 26Q21.500 23.500 25 26L23.800 34Q21.500 36.500 19.200 34Z" fill="#fff" /><path d="M15.500 27A9 9 0 1 1 27.500 27M13 32.500A13.300 13.300 0 1 1 30 32.500" stroke="#fff" strokeWidth="1.700" fill="none" /></Tile>],
  [<Tile key="i" id="tv" grad={["#22332f", "#0a0c0d"]}><path d={apple} transform="translate(7 16) scale(.92)" fill="#fff" /><text x="20" y="28.500" fontSize="16" fontWeight="500" fill="#fff" fontFamily="Inter">tv</text></Tile>],
  [<Tile key="i" id="store" grad={["#1ac3fb", "#1d6ff0"]}><path d="M23.500 12L14.500 28M19.500 12L30.500 32M10 27.500H24M28.500 27.500H33.500M13 31L12 33" stroke="#fff" strokeWidth="2.700" strokeLinecap="round" fill="none" /></Tile>],
  [<Tile key="i" id="zoom" grad={["#1795fb", "#0b66f2"]}><rect x="8.500" y="15" width="17.500" height="15" rx="4" fill="#fff" /><path d="M27.500 20.500L34.500 16V29L27.500 24.500Z" fill="#fff" /></Tile>, true],
  [<Tile key="i" id="prefs" grad={["#cfdad8", "#83878b"]}><circle cx="21.500" cy="22.500" r="15" fill="#62666a" /><circle cx="21.500" cy="22.500" r="14" fill="none" stroke="#2f3234" strokeWidth="2.500" strokeDasharray="1.500 1" /><circle cx="21.500" cy="22.500" r="9.500" fill="#9b9fa3" stroke="#34383a" strokeWidth="1.500" /><path d="M21.500 22.500L17 13.500M21.500 22.500L16 31M21.500 22.500H31.500" stroke="#2f3234" strokeWidth="2" /><circle cx="21.500" cy="22.500" r="3" fill="#767a7e" stroke="#2f3234" /></Tile>, false, "1"],
  "rule",
  [<Tile key="i" fill="#b3b3b6"><rect x="5" y="6" width="33" height="33" rx="7" fill="#242426" stroke="#000" strokeWidth="1.800" /><path d="M9.500 12L12.500 14.200L9.500 16.500M14 17.500H18.500" stroke="#f5f5f5" strokeWidth="1.300" fill="none" /></Tile>, true],
  [<Tile key="i" id="bt" grad={["#17a7fb", "#0c6df2"]}><path d="M14 16L28.500 29L21.500 34.500V10.500L28.500 16L14 29" stroke="#fff" strokeWidth="1.900" fill="none" /></Tile>, true],
  [<svg key="i" width="43" height="43" viewBox="0 0 43 43"><rect x="2" y="3" width="39" height="39" fill="#f7f8fa" /><g transform="translate(3 4) scale(1.850)"><Sparkle size={20} mono="#2673a8" k={0.85} /></g></svg>, true],
  [<svg key="i" width="43" height="43" viewBox="0 0 43 43"><rect x="0" y="0" width="43" height="43" rx="5" fill="#1d5a7e" /><path d="M5 6Q9 4 13 6Q24 9 28 20Q31 29 38 31L33 33Q36 36 38 39Q32 36 28 30Q24 33 23 37Q19 33 18 27Q14 28 13 33Q8 25 8 17Q8 11 5 6Z" fill="none" stroke="#dfeaf2" strokeWidth="1.200" /><path d="M32 6L39 12M31 4V7.500H34M40 14V10.500H37" stroke="#eef4f8" strokeWidth="1.800" fill="none" /></svg>, true],
  [<Tile key="i" fill="#fff"><path d="M14 10H33Q34 10 34 11.500V16.500H12V12Q12 10 14 10Z" fill="#41a5ee" /><path d="M12 16.500H34V22.500H12Z" fill="#2b7cd3" /><path d="M12 22.500H34V28.500H12Z" fill="#185abd" /><path d="M12 28.500H34V33Q34 34.500 33 34.500H14Q12 34.500 12 33Z" fill="#103f91" /><rect x="5.500" y="15" width="14.500" height="14.500" rx="1.500" fill="#185abd" /><text x="12.700" y="26" textAnchor="middle" fontSize="10" fontWeight="700" fill="#fff" fontFamily="Inter">W</text></Tile>, true],
  "rule2",
  [<svg key="i" width="43" height="43" viewBox="0 0 43 43"><path d="M30 7H36V24H30Z" fill="#e4cfa0" /><path d="M7.500 4H27L35 12V42H7.500Z" fill="#fafafa" stroke="#ccc" strokeWidth=".6" /><path d="M27 4L35 12V16H27Z" fill="#d9d9d9" /><rect x="11" y="13" width="20" height="20" rx="2" fill="#1d4f6d" /><path d="M14 16Q25 17 28 30Q23 26 21 30Q16 24 14 16Z" fill="none" stroke="#dfeaf2" /><text x="21" y="40" textAnchor="middle" fontSize="6.500" fill="#888" fontFamily="Inter">SQL</text></svg>],
  [<svg key="i" width="44" height="43" viewBox="0 0 44 43"><rect x=".8" y=".8" width="42.400" height="41.500" fill="#fafafa" stroke="#101010" strokeWidth="1.600" /><path d="M4 4H30M4 7H38M4 10H34M4 13H28M4 16H36M4 19H37M4 22H24M4 25H33M4 28H38M4 31H35M4 34H20M4 37H30" stroke="#c9c9c9" strokeWidth=".8" strokeDasharray="5 1 3 1 7 1" /></svg>],
  [<svg key="i" width="43" height="43" viewBox="0 0 43 43"><path d="M6 5H37L33 39Q32 42 21.500 42Q11 42 10 39Z" fill="#dcdcdd" /><path d="M9 7L14 2L19 5L24 1L28 5L33 3L35 8L28 11H14Z" fill="#f4f4f4" stroke="#8c8c8c" strokeWidth=".7" /><path d="M12 7L17 5L19 9M23 4L27 8M30 6L33 9" stroke="#333" strokeWidth="1.500" fill="none" /><ellipse cx="21.500" cy="6.500" rx="16" ry="4" fill="none" stroke="#f1f1f1" strokeWidth="1.400" /><path d="M13 14L15 39M21 14V40M29 14L27 39M17 20L26 30M28 18L18 34" stroke="#f0f0f0" strokeWidth="1.500" opacity=".8" /></svg>],
];

const menus = [["File", 21, 20], ["Data", 28], ["Worksheet", 64], ["Dashboard", 65], ["Story", 32], ["Analysis", 50], ["Map", 26, 20], ["Format", 42], ["Server", 40], ["Window", 48, 20], ["Help", 28]];
const tabs = [["Category TS1", 74, 90, 2], ["Category TS2", 74, 91, 5], ["Sub Category TS2", 99, 117, 5], ["High using select", 93, 111, 5], ["Results using Select", 110, 128, 5], ["High Using Hover", 94, 111, 5], ["Results using Hover", 108, 126, 5], ["High Using Menu", 92, 110, 5], ["Results Using Menu", 107, 126, 5], ["Dynamic Title", 74, 91, 5]];

export default function App() {
  return (
    <>
      <GlobalStyle />
      <Desktop>
        <MenuBar>
          <svg width="13" height="16" viewBox="2 -0.500 11 14"><path d={apple} fill="#efe3fa" /></svg>
          <MenuItem w={94} $ml={20} $bold>Tableau Public</MenuItem>
          {menus.map(([t, w, ml]) => <MenuItem key={t} w={w} $ml={ml}>{t}</MenuItem>)}
          <MenuSpacer />
          <svg width="16" height="16"><rect width="16" height="16" rx="4" fill="#efe6fa" /><rect x="2" y="4.500" width="8.500" height="7.500" rx="2" fill="#3a0898" /><path d="M11.300 7L14 5V11.500L11.300 9.500Z" fill="#3a0898" /></svg>
          <MenuExtra $ml={15}><svg width="15" height="14"><circle cx="7.500" cy="7" r="6" fill="none" stroke="#efe6fa" strokeWidth="1.300" /><path d="M5.700 4.300L10.500 7L5.700 9.700Z" fill="#efe6fa" /></svg></MenuExtra>
          <MenuExtra $ml={17}><svg width="26" height="12"><rect x=".5" y=".5" width="22" height="11" rx="3" fill="none" stroke="#a98bdc" /><rect x="2" y="2" width="11" height="8" rx="1.500" fill="#efe6fa" /><path d="M24 4Q25.500 6 24 8Z" fill="#a98bdc" /></svg></MenuExtra>
          <MenuExtra $ml={18}><svg width="17" height="12" fill="none" stroke="#efe6fa" strokeWidth="1.900"><path d="M1 4.200Q8.500 -2 16 4.200M3.500 7Q8.500 3 13.500 7" /><path d="M8.500 11.800L5.900 9.200Q8.500 7.200 11.100 9.200Z" fill="#efe6fa" stroke="none" /></svg></MenuExtra>
          <MenuExtra $ml={18}><svg width="14" height="14" fill="none" stroke="#efe6fa" strokeWidth="1.500"><circle cx="5.800" cy="5.800" r="4.700" /><path d="M9.300 9.300L13 13" /></svg></MenuExtra>
          <MenuExtra $ml={17}><svg width="15" height="14"><rect x=".7" y=".7" width="13.600" height="5" rx="2.500" fill="none" stroke="#efe6fa" strokeWidth="1.200" /><circle cx="3.500" cy="3.200" r="2" fill="#efe6fa" /><rect x=".5" y="7.800" width="14" height="5.800" rx="2.900" fill="#efe6fa" /><circle cx="11.300" cy="10.700" r="1.900" fill="#3c0a9c" /></svg></MenuExtra>
          <MenuExtra $ml={16}><svg width="14" height="14"><circle cx="7" cy="7" r="7" fill="#3c3a7a" /><path d="M1 5Q4 -1 9 2L7 8Z" fill="#e84f7d" /><path d="M13 6Q14 12 8 13L6 8Z" fill="#28b6c4" /><path d="M1 8Q4 13 8 12L7 7Z" fill="#4b8fe6" /><circle cx="7" cy="7" r="2.800" fill="#d9fbf2" /></svg></MenuExtra>
          <MenuItem w={60} $ml={16}>Thu Oct 6</MenuItem>
          <MenuItem w={51} $ml={7}>8:40 PM</MenuItem>
        </MenuBar>

        <Window>
          <TitleBar>
            <Light $c="#ff4a41" $b="#e8392f" /><Light $c="#febc02" $b="#e5a400" /><Light $c="#06cb2b" $b="#06b225" />
            <WindowTitle>
              <svg width="16" height="16" viewBox="0 0 16 16"><rect width="16" height="16" fill="#fff" stroke="#c9c9c9" /><g transform="translate(.5 .5) scale(.75)"><Sparkle size={20} mono="#1f77b4" k={1.6} /></g></svg>
              <Fit w={223}>Tableau Public - Tableau_workings</Fit>
            </WindowTitle>
          </TitleBar>

          <Toolbar>
            <Tool $ml={14}><Sparkle size={19} k={1.2} /></Tool>
            <Divider $ml={14} />
            {tools.map(([name, ml, off], i) => {
              if (name === "|") return <Divider key={i} $ml={ml} />;
              if (name === "select") return <FitSelect key={i}><Caret w={7} h={4} /></FitSelect>;
              return (
                <Tool key={i} $ml={ml} $off={off}>
                  {name === "caret" ? <Caret /> : <Line>{icons[name]}</Line>}
                </Tool>
              );
            })}
            <ShowMe>
              <svg width="14" height="16"><path d="M0 0H11V3H0Z" fill="#86709b" /><path d="M0 4H14V7H0Z" fill="#76a0c8" /><path d="M0 8H5V11H0Z" fill="#f2a074" /><path d="M0 12H8V15H0Z" fill="#ef5f70" /></svg>
              <Fit w={50}>Show Me</Fit>
            </ShowMe>
          </Toolbar>

          <Body>
            <Side>
              <SideTabs>
                <ActiveTab><Fit w={61}>Dashboard</Fit></ActiveTab>
                <OtherTab><Fit w={37}>Layout</Fit><Line w={8} h={11} sw={1.3} color="#555"><path d="M6.500 1L1.500 5.500L6.500 10" /></Line></OtherTab>
              </SideTabs>
              <Section $h={99} $top={12}>
                <DeviceRow $pad={13} $on><Fit w={39}>Default</Fit></DeviceRow>
                <DeviceRow $pad={23}><Fit w={35}>Phone</Fit></DeviceRow>
                <PreviewButton><Fit w={82}>Device Preview</Fit></PreviewButton>
              </Section>
              <Section $h={73}>
                <Heading><Fit w={24}>Size</Fit></Heading>
                <SizeSelect><Fit w={57}>Automatic</Fit><Caret w={7} h={4} fill="#555" /></SizeSelect>
              </Section>
              <Section $h={226}>
                <Heading><Fit w={39}>Sheets</Fit></Heading>
                <SheetBox>
                  <div>{sheets.map(([t, w, c]) => <SheetRow key={t}><SheetGlyph check={c} /><Fit w={w}>{t}</Fit></SheetRow>)}</div>
                  <Track><Thumb /></Track>
                </SheetBox>
              </Section>
              <Section $h={258} $last>
                <Heading><Fit w={44}>Objects</Fit></Heading>
                <ObjectGrid>
                  {objects.map(([t, w, d]) => <ObjectItem key={t}><Line w={16} h={15} stroke="#606060">{d}</Line><Fit w={w}>{t}</Fit></ObjectItem>)}
                </ObjectGrid>
                <Segmented><Segment $on><Fit w={26}>Tiled</Fit></Segment><Segment><Fit w={39}>Floati...</Fit></Segment></Segmented>
                <CheckRow>
                  <Line w={16} h={16} stroke="#666"><rect x=".5" y=".5" width="14" height="14" rx="1" /><path d="M4 8L6.500 11L11 4.500" strokeWidth="1.600" /></Line>
                  <Fit w={111}>Show dashboard ti...</Fit>
                </CheckRow>
              </Section>
            </Side>

            <Canvas>
              <DashTitle><Fit w={604}>Dashboard Using Horizontal Object</Fit></DashTitle>
              <Panels>
                <MapPanel>
                  <MapTitle><Fit w={204} lean={7.5}>Statewise Sales</Fit></MapTitle>
                  <MapFrame><SalesMap /></MapFrame>
                  <SearchControl><Line w={14} h={14} sw={1.3} color="#555"><circle cx="8.500" cy="5.500" r="4.500" /><path d="M5.300 8.700L1.500 12.500" /></Line></SearchControl>
                  <ZoomControl>
                    <svg width="26" height="108" fill="none" stroke="#555">
                      <path d="M8 13H18M13 8V18M8 38H18" strokeWidth="2" />
                      <rect x="2.500" y="52.500" width="21" height="21" fill="#e5e5e5" stroke="#ababab" />
                      <path d="M8 55L15 57L13.500 59L12 60L13 65L5 62L8.500 60ZM8 64L5.500 68" strokeWidth="1.300" stroke="#333" />
                      <path d="M15 64L21 70.500M21 64L15 70.500" strokeWidth="2" stroke="#222" />
                      <path d="M4 80.500H22" stroke="#d4d4d4" />
                      <path d="M10 90V100L17 95Z" fill="#4a4a4a" stroke="none" />
                    </svg>
                  </ZoomControl>
                </MapPanel>
                <ChartPanel>
                  <ChartTitle><Fit w={425}>Yearly Sales by Segment along with Category</Fit></ChartTitle>
                  <AreaChart />
                </ChartPanel>
                <Legend>
                  <LegendTitle><Fit w={30}>Sales</Fit></LegendTitle>
                  <Ramp><RampMark /></Ramp>
                  <RampEnds><Fit w={22}>920</Fit><Fit w={30}>458K</Fit></RampEnds>
                  <LegendTitle><Fit w={51}>Category</Fit></LegendTitle>
                  <LegendRow><Swatch $c="#92abc9" /><Fit w={41}>Furnit..</Fit></LegendRow>
                  <LegendRow><Swatch $c="#f5b97e" /><Fit w={43}>Office ..</Fit></LegendRow>
                  <LegendRow><Swatch $c="#ec989a" /><Fit w={40}>Techn..</Fit></LegendRow>
                </Legend>
              </Panels>
            </Canvas>
            <Gutter />
          </Body>

          <TabStrip>
            <SheetTab $w={131} $pad={9}>
              <Line w={11} h={12} stroke="#555"><path d="M1.500 3V9.500Q5 12 8.500 9.500V3Q5 5 1.500 3Q5 -.5 8.500 3" /></Line>
              <Fit w={67}>Data Source</Fit>
            </SheetTab>
            {tabs.map(([t, tw, w, pad]) => <SheetTab key={t} $w={w} $pad={pad}><Fit w={tw}>{t}</Fit></SheetTab>)}
            <SheetTab $w={112} $pad={6} $on>
              <Line w={14} h={12} stroke="#555"><path d="M1.500 .5H11.500V10.500H1.500ZM6.500 .5V10.500M1.500 5.500H11.500" /></Line>
              <Fit w={80}>Dashboard 10</Fit>
            </SheetTab>
            <SheetTab $w={32} $pad={7}><Line w={18} h={16} stroke="#555"><path d="M8 13.500H1.500V1.500H12.500V8M4.500 10.500V8M7 10.500V4.500M9.500 10.500V6" /><path d="M12 8V16M8 12H16" strokeWidth="1.700" /></Line></SheetTab>
            <SheetTab $w={32} $pad={7}><Line w={18} h={16} stroke="#555"><path d="M8 12.500H1.500V1.500H12.500V8M7 1.500V12.500M1.500 7H12.500" /><path d="M12 8V16M8 12H16" strokeWidth="1.700" /></Line></SheetTab>
            <SheetTab $w={33} $pad={7}><Line w={18} h={16} stroke="#555"><path d="M7 14L1.500 12V1.500L7 4L12.500 1.500V8M7 4V12" /><path d="M12 8V16M8 12H16" strokeWidth="1.700" /></Line></SheetTab>
          </TabStrip>
          <StatusBar>
            <StatusCell $w={127} $pl={6} $pr={7} $gap={9}>
              <Line w={11} h={14} stroke="#555"><circle cx="5.500" cy="3.500" r="2.300" /><path d="M1 12.500Q0 7.500 3.500 7.500H7.500Q11 7.500 10 12.500Z" /></Line>
              <Fit w={31}>samnu</Fit>
              <MenuSpacer /><Caret w={8} h={5} fill="#000" />
            </StatusCell>
            <StatusCell $w={27} /><StatusCell $w={27} /><StatusCell $w={47} />
            <StatusCell $w={71} $pl={8}>
              <svg width="58" height="8" fill="#555"><path d="M0 0H1.200V8H0ZM6 0V8L2 4ZM21 0V8L17 4ZM33 0V8L37 4ZM48 0V8L52 4ZM53 0H54.200V8H53Z" /></svg>
            </StatusCell>
            <StatusCell $w={76} $pl={8}>
              <svg width="56" height="12"><path d="M0 0H3V3H0ZM4 0H7V3H4ZM8 0H11V3H8ZM0 4H3V7H0ZM4 4H7V7H4ZM8 4H11V7H8ZM0 8H3V11H0ZM4 8H7V11H4ZM8 8H11V11H8ZM21 0H32V7H21ZM21 8H24V11H21ZM25 8H28V11H25ZM29 8H32V11H29Z" fill="#b5b5b5" /><path d="M42 0H53V11H42Z" fill="#575757" /></svg>
            </StatusCell>
          </StatusBar>
        </Window>

        <DockBar>
          {dock.map((d, i) => {
            if (typeof d === "string") return <DockRule key={i} $r={d === "rule" ? 10 : 11} />;
            const [icon, running, badge] = d;
            return (
              <DockSlot key={i}>
                {icon}
                {running && <RunDot />}
                {badge && <Badge>{badge}</Badge>}
              </DockSlot>
            );
          })}
        </DockBar>
      </Desktop>
    </>
  );
}
